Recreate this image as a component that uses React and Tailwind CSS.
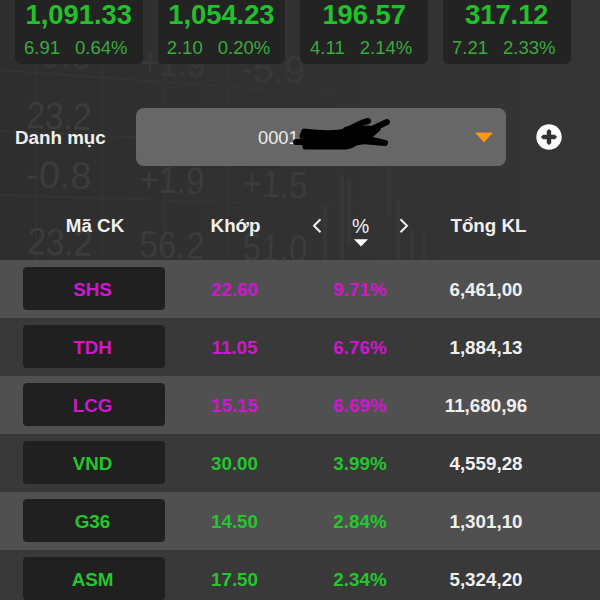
import React from 'react'

const INDICES = [
  { value: '1,091.33', change: '6.91', percent: '0.64%' },
  { value: '1,054.23', change: '2.10', percent: '0.20%' },
  { value: '196.57', change: '4.11', percent: '2.14%' },
  { value: '317.12', change: '7.21', percent: '2.33%' },
]

const STOCKS = [
  { code: 'SHS', price: '22.60', percent: '9.71%', volume: '6,461,00', ceiling: true },
  { code: 'TDH', price: '11.05', percent: '6.76%', volume: '1,884,13', ceiling: true },
  { code: 'LCG', price: '15.15', percent: '6.69%', volume: '11,680,96', ceiling: true },
  { code: 'VND', price: '30.00', percent: '3.99%', volume: '4,559,28' },
  { code: 'G36', price: '14.50', percent: '2.84%', volume: '1,301,10' },
  { code: 'ASM', price: '17.50', percent: '2.34%', volume: '5,324,20' },
]

const TICKS = [
  { x: 27, y: 67, text: '-0.9', dim: true },
  { x: 140, y: 75, text: '+1.9', dim: true },
  { x: 240, y: 81, text: '-5.9', dim: true },
  { x: 26, y: 128, text: '23.2' },
  { x: 26, y: 187, text: '-0.8' },
  { x: 139, y: 192, text: '+1.9' },
  { x: 242, y: 196, text: '+1.5' },
  { x: 27, y: 254, text: '23.2' },
  { x: 139, y: 257, text: '56.2' },
  { x: 242, y: 260, text: '51.0' },
]

function Backdrop() {
  return (
    <svg className="absolute inset-0" width="600" height="600" aria-hidden="true">
      <g stroke="#353535" strokeWidth="1.5" fill="none">
        <path d="M0 70L340 95M0 131L340 146M0 195L340 206L600 222" />
        <path d="M36 0V260M102 0V260M165 60V260M228 60V260M286 0V260M454 165V260" />
      </g>
      <g stroke="#373737" strokeWidth="4">
        <path d="M325 205V260M342 175V260M349 180V245M389 165V215M398 200V260M412 230V260M424 235V260" />
      </g>
      <g fontSize="38">
        {TICKS.map((t, i) => (
          <text
            key={i}
            x={t.x}
            y={t.y}
            fill={t.dim ? '#383838' : '#3c3c3c'}
            textLength="65"
            lengthAdjust="spacingAndGlyphs"
            transform={`rotate(2 ${t.x} ${t.y})`}
          >
            {t.text}
          </text>
        ))}
      </g>
    </svg>
  )
}

function IndexCard({ item }) {
  return (
    <div className="h-16 w-[127.5px] shrink-0 rounded-b-md bg-[#232323] text-center whitespace-nowrap">
      <p className="text-[27.3px] leading-[30px] font-bold text-[#21c12a]">{item.value}</p>
      <p className="mt-[3px] flex justify-center gap-[15px] pr-1.5 text-[18.5px] leading-[30px] text-[#39ab3d]">
        <span>{item.change}</span>
        <span>{item.percent}</span>
      </p>
    </div>
  )
}

function Portfolio() {
  return (
    <div className="mt-11 flex h-[58px] items-center">
      <p className="w-[136px] pt-0.5 pl-[15px] text-[18.8px] font-bold text-[#f0f0f0]">Danh mục</p>
      <button className="relative flex h-full w-[370px] items-center rounded-lg bg-[#676767] pt-0.5 pl-[122px] text-[18.3px] text-[#ededed]">
        0001
        <svg className="absolute top-[5px] left-[150px]" width="110" height="45" viewBox="286 113 110 45" aria-hidden="true">
          <g stroke="#000" strokeLinecap="round" strokeLinejoin="round">
            <path d="M304 131C320 133 336 134 348 130L367 128L378 129L370 136L372 140L356 143C349 148 343 147 335 147H305L304 141L302 136Z" strokeWidth="5" />
            <path d="M296 142H306M346 130C354 128 359 123 368 121M370 130L387 122M368 139L385 143L362 141" fill="none" strokeWidth="6" />
          </g>
        </svg>
        <svg className="mr-[13px] mb-0.5 ml-auto" width="18" height="11" viewBox="0 0 18 11" aria-hidden="true">
          <path d="M.8 1H17.2L9 10Z" fill="#ff9612" stroke="#ff9612" strokeWidth=".8" strokeLinejoin="round" />
        </svg>
      </button>
      <button className="ml-[30px]" aria-label="Thêm">
        <svg width="26" height="26" viewBox="0 0 26 26">
          <circle cx="13" cy="13" r="12.7" fill="#fff" />
          <path d="M13 6.5V19.5M6.5 13H19.5" stroke="#333" strokeWidth="4.4" />
          <path d="M13 6.5V19.5M6.5 13H19.5" stroke="#333" strokeWidth="2.6" strokeLinecap="round" />
        </svg>
      </button>
    </div>
  )
}

function TableHead() {
  return (
    <div className="mt-[30px] grid h-16 grid-cols-[190px_91px_159px_97px] pt-[15px] text-center text-[18.8px] leading-[30px] font-bold text-[#f0f0f0]">
      <span>Mã CK</span>
      <span>Khớp</span>
      <span className="flex items-start justify-center gap-[30px] font-normal">
        <svg className="mt-[7px]" width="10" height="15" viewBox="0 0 10 15" fill="none" stroke="#f0f0f0" strokeWidth="2">
          <path d="M8.5 1.2L2 7.7L8.5 14.2" />
        </svg>
        <span className="flex flex-col items-center">
          <span className="text-[19.4px] leading-[30px]">%</span>
          <svg className="-mt-[2px]" width="14" height="8" viewBox="0 0 14 8" fill="#fff">
            <path d="M0 .2H14L7 7.6Z" />
          </svg>
        </span>
        <svg className="mt-[7px]" width="10" height="15" viewBox="0 0 10 15" fill="none" stroke="#f0f0f0" strokeWidth="2">
          <path d="M1.5 1.2L8 7.7L1.5 14.2" />
        </svg>
      </span>
      <span>Tổng KL</span>
    </div>
  )
}

function StockRow({ stock }) {
  const color = stock.ceiling ? 'text-[#cd18cb]' : 'text-[#26c52e]'
  return (
    <div className="grid h-[58px] grid-cols-[187px_95px_156px_96px] items-center text-center text-[18.8px] font-bold odd:bg-[#505050] even:bg-[#393939]">
      <div className={`mx-auto mb-px h-[43px] w-[142px] rounded bg-[#202020] pr-0.5 leading-[45px] ${color}`}>{stock.code}</div>
      <span className={`pt-0.5 ${color}`}>{stock.price}</span>
      <span className={`pt-0.5 ${color}`}>{stock.percent}</span>
      <span className="pt-0.5 text-[#f0f0f0]">{stock.volume}</span>
    </div>
  )
}

export default function App() {
  return (
    <div className="relative h-[600px] w-[600px] overflow-hidden bg-linear-to-r from-[#2e2e2e] to-[#353535] font-['Liberation_Sans',sans-serif]">
      <Backdrop />
      <div className="relative">
        <div className="flex gap-[15.2px] pl-[15px]">
          {INDICES.map((item) => (
            <IndexCard key={item.value} item={item} />
          ))}
        </div>
        <Portfolio />
        <TableHead />
        <div>
          {STOCKS.map((stock) => (
            <StockRow key={stock.code} stock={stock} />
          ))}
        </div>
      </div>
    </div>
  )
}
